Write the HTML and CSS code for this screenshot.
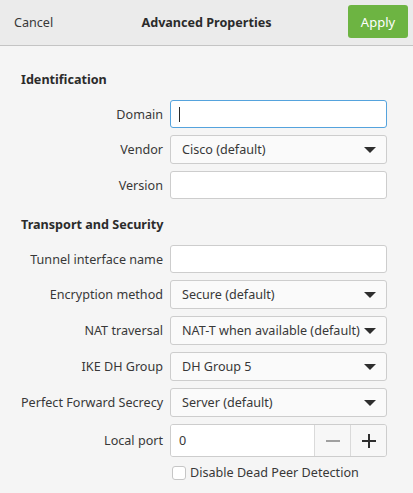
FILE: index.html
```html
<!DOCTYPE html>
<html>
<head>
<meta charset="utf-8">
<link rel="stylesheet" href="styles.css">
</head>
<body>
<div class="window">
  <header class="titlebar">
    <span class="cancel">Cancel</span>
    <span class="title">Advanced Properties</span>
    <span class="apply-wrap"><button class="apply">Apply</button></span>
  </header>
  <main class="form">
    <div class="section-title">Identification</div>

    <label class="label">Domain</label>
    <div class="entry focused"><span class="caret"></span></div>

    <label class="label">Vendor</label>
    <div class="combo"><span>Cisco (default)</span><span class="arrow"></span></div>

    <label class="label">Version</label>
    <div class="entry"></div>

    <div class="section-title second">Transport and Security</div>

    <label class="label">Tunnel interface name</label>
    <div class="entry"></div>

    <label class="label">Encryption method</label>
    <div class="combo"><span>Secure (default)</span><span class="arrow"></span></div>

    <label class="label">NAT traversal</label>
    <div class="combo"><span>NAT-T when available (default)</span><span class="arrow"></span></div>

    <label class="label">IKE DH Group</label>
    <div class="combo"><span>DH Group 5</span><span class="arrow"></span></div>

    <label class="label">Perfect Forward Secrecy</label>
    <div class="combo"><span>Server (default)</span><span class="arrow"></span></div>

    <label class="label">Local port</label>
    <div class="spin">
      <span class="spin-value">0</span>
      <span class="spin-btn minus"><svg width="14" height="14" viewBox="0 0 14 14"><rect x="0" y="6" width="14" height="2" fill="#a0a0a0"/></svg></span>
      <span class="spin-btn plus"><svg width="14" height="14" viewBox="0 0 14 14"><rect x="0" y="6" width="14" height="2" fill="#2e2e2e"/><rect x="6" y="0" width="2" height="14" fill="#2e2e2e"/></svg></span>
    </div>

    <div class="check-row">
      <span class="checkbox"></span>
      <span class="check-label">Disable Dead Peer Detection</span>
    </div>
  </main>
</div>
</body>
</html>
```

FILE: styles.css
```css
* { box-sizing: border-box; }
html, body {
  margin: 0;
  padding: 0;
  background: #f5f5f5;
}
body {
  font-family: "Noto Sans", "DejaVu Sans", sans-serif;
  font-size: 12.6px;
  color: #383838;
  width: 413px;
  height: 493px;
  overflow: hidden;
}
.titlebar {
  height: 46px;
  background: #ebebeb;
  border-bottom: 1px solid #c4c4c4;
  display: grid;
  grid-template-columns: 1fr auto 1fr;
  align-items: center;
}
.cancel {
  padding-left: 14px;
  color: #383838;
  margin-top: -1px;
}
.title {
  font-weight: bold;
  color: #2b2b2b;
  margin-top: -1px;
}
.apply-wrap {
  display: flex;
  justify-content: flex-end;
  padding-right: 5px;
  align-self: start;
  padding-top: 5px;
}
.apply {
  width: 60px;
  height: 33px;
  border: none;
  border-radius: 3px;
  background: #6db442;
  color: #ffffff;
  font-family: inherit;
  font-size: 13px;
  padding: 0;
}
.form {
  display: grid;
  grid-template-columns: 142px 217px;
  column-gap: 7px;
  row-gap: 7px;
  padding: 25px 0 0 21px;
  align-items: center;
}
.section-title {
  grid-column: 1 / 3;
  font-weight: bold;
  color: #2b2b2b;
  line-height: 18px;
  margin-bottom: 4px;
}
.section-title.second {
  margin-top: 10px;
}
.label {
  text-align: right;
  white-space: nowrap;
}
.entry {
  height: 28px;
  background: #ffffff;
  border: 1px solid #cdcdcd;
  border-radius: 3px;
  display: flex;
  align-items: center;
  padding-left: 8px;
}
.entry.focused {
  border-color: #55a3dd;
}
.caret {
  width: 1px;
  height: 15px;
  background: #2a2a2a;
}
.combo {
  height: 29px;
  background: #fafafa;
  border: 1px solid #cdcdcd;
  border-radius: 3px;
  display: flex;
  align-items: center;
  justify-content: space-between;
  padding: 0 10px 0 11px;
  white-space: nowrap;
}
.arrow {
  width: 0;
  height: 0;
  border-left: 6px solid transparent;
  border-right: 6px solid transparent;
  border-top: 6px solid #2e2e2e;
  flex-shrink: 0;
}
.spin {
  height: 33px;
  border: 1px solid #cdcdcd;
  border-radius: 3px;
  display: flex;
  overflow: hidden;
}
.spin-value {
  flex: 1;
  background: #ffffff;
  display: flex;
  align-items: center;
  padding-left: 8px;
}
.spin-btn {
  width: 36px;
  background: #f7f7f7;
  border-left: 1px solid #dadada;
  display: flex;
  align-items: center;
  justify-content: center;
}
.check-row {
  grid-column: 2;
  display: flex;
  align-items: center;
  gap: 4px;
  margin-left: 2px;
}
.checkbox {
  width: 14px;
  height: 14px;
  border: 1px solid #c6c6c6;
  border-radius: 3px;
  background: #ffffff;
}
```
